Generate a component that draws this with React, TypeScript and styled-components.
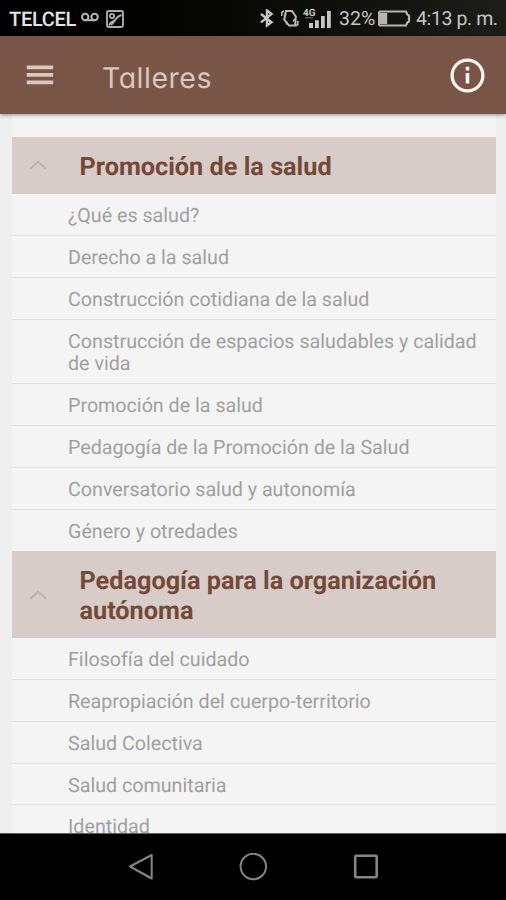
import React from 'react';
import styled, { createGlobalStyle } from 'styled-components';

const Global = createGlobalStyle`
  * { box-sizing: border-box; }
  html, body { margin: 0; padding: 0; background: #000; }
  body { font-family: Roboto, "Liberation Sans", sans-serif; text-rendering: geometricPrecision; }
`;

const Screen = styled.div`
  width: 506px;
  height: 900px;
  display: flex;
  flex-direction: column;
  overflow: hidden;
  background: #f2f2f2;
`;

const StatusBar = styled.header`
  height: 36px;
  flex: none;
  display: flex;
  align-items: center;
  padding: 2px 8px 0 9px;
  background: linear-gradient(90deg, #000 0%, #030402 30%, #0c0d08 60%, #1d1e19 100%);
  color: #c6c6c4;
  font-size: 19.5px;
  line-height: 24px;
  white-space: nowrap;
`;

const Carrier = styled.span`
  width: 72px;
  color: #e4e4e4;
  font-weight: 500;
  font-size: 20px;
  letter-spacing: -0.3px;
`;

const StatusIcon = styled.svg<{ $gap?: number }>`
  display: block;
  flex: none;
  margin-left: ${({ $gap = 0 }) => $gap}px;
`;

const Spacer = styled.div`
  flex: 1;
`;

const Percent = styled.span`
  width: 39px;
  margin-left: 7px;
  letter-spacing: 0;
`;

const Clock = styled.span`
  width: 82px;
  margin-left: 5px;
  letter-spacing: -0.4px;
`;

const AppBar = styled.div`
  height: 78px;
  flex: none;
  display: flex;
  align-items: center;
  padding: 0 21px 0 26px;
  background: #795548;
  box-shadow: 0 1px 4px rgba(0, 0, 0, 0.4);
  z-index: 1;
`;

const IconButton = styled.button`
  padding: 0;
  border: 0;
  background: none;
  display: flex;
`;

const Title = styled.h1`
  flex: 1;
  margin: 5px 0 0 48px;
  color: #dac7be;
  font-family: Inter, Lato, sans-serif;
  font-feature-settings: "cv11";
  font-size: 28.5px;
  letter-spacing: 0.5px;
  font-weight: 400;
  line-height: 34px;
`;

const Content = styled.main`
  flex: 1;
  min-height: 0;
  overflow: hidden;
  padding: 0 10px 0 12px;
  background: #eeeeee;
`;

const Accordion = styled.div`
  padding-top: 23px;
  background: #f4f4f4;
`;

const SectionHead = styled.div`
  display: flex;
  align-items: center;
  padding: 13.6px 12px 14.2px 17px;
  background: #d7ccc8;
`;

const Chevron = styled.svg`
  flex: none;
`;

const SectionTitle = styled.h2`
  margin: 2.4px 0 -2.4px 31.5px;
  color: #754937;
  font-size: 25.25px;
  font-weight: 700;
  line-height: 29.5px;
`;

const Item = styled.div`
  padding: 11px 8px 7px 56px;
  border-bottom: 1px solid #dfdfdf;
  color: #a0a0a0;
  font-size: 19.68px;
  line-height: 22.8px;
  &:last-child { border-bottom-color: transparent; }
`;

const NavBar = styled.nav`
  height: 67px;
  flex: none;
  display: flex;
  align-items: center;
  justify-content: center;
  gap: 86px;
  border-top: 1px solid #5c5e5d;
  background: #000;
`;

const sections = [
  {
    title: 'Promoción de la salud',
    items: [
      '¿Qué es salud?',
      'Derecho a la salud',
      'Construcción cotidiana de la salud',
      'Construcción de espacios saludables y calidad de vida',
      'Promoción de la salud',
      'Pedagogía de la Promoción de la Salud',
      'Conversatorio salud y autonomía',
      'Género y otredades',
    ],
  },
  {
    title: 'Pedagogía para la organización autónoma',
    items: [
      'Filosofía del cuidado',
      'Reapropiación del cuerpo-territorio',
      'Salud Colectiva',
      'Salud comunitaria',
      'Identidad',
    ],
  },
];

const NetworkLabel = styled.text`
  font: 700 10px Roboto, sans-serif;
  fill: #c6c6c4;
`;

export default function App() {
  return (
    <Screen>
      <Global />
      <StatusBar>
        <Carrier>TELCEL</Carrier>
        <StatusIcon width="18" height="14" viewBox="0 0 18 14" fill="none" stroke="#b5b5b5" strokeWidth="2">
          <circle cx="4.2" cy="5" r="3.2" />
          <circle cx="13.6" cy="5" r="3.2" />
          <path d="M4.2 8.2h9.4" />
        </StatusIcon>
        <StatusIcon $gap={7} width="18" height="18" viewBox="0 0 18 18" fill="none" stroke="#aaa" strokeWidth="1.9">
          <rect x="1" y="1" width="16" height="16" rx="1.5" />
          <circle cx="6" cy="6" r="2.1" />
          <path d="M3 15.5C5 10 8 12 9.5 9.5S12 6 15.5 5" />
          <path d="m5 15 4-4.5" />
        </StatusIcon>
        <Spacer />
        <StatusIcon width="14" height="20" viewBox="0 0 14 20" fill="none" stroke="#c6c6c4" strokeWidth="2.4">
          <path d="M1 5 11.5 13.2 7 16.5V1.4l4.5 3.7L1 13.4" />
        </StatusIcon>
        <StatusIcon $gap={7} width="18" height="20" viewBox="0 0 18 20" fill="none" stroke="#b8b8b6" strokeWidth="2">
          <path d="M5 2h6l3.8 5.5-.6 9H8L3.2 10.5z" />
          <path d="M.8 7V3.5L3 2M3.3 7.5 5 5M16.8 12v3.5L14.5 17M12.2 12.5 13.8 10M5.5 12v3.5" strokeWidth="1.6" />
        </StatusIcon>
        <StatusIcon $gap={4} width="29" height="24" viewBox="0 0 29 24" fill="#c6c6c4">
          <NetworkLabel x="0" y="8.5" textLength="12.5" lengthAdjust="spacingAndGlyphs">4G</NetworkLabel>
          <path d="M2 10h8v1.5H2z" fill="#555" />
          <path d="M6 16h4v5H6zM12 13.2h3.8V21H12zM18 9h3.8v12H18zM24 4h3.8v17H24z" />
        </StatusIcon>
        <Percent>32%</Percent>
        <StatusIcon width="33" height="18" viewBox="0 0 33 18" fill="none" stroke="#b5b5b3" strokeWidth="2.2">
          <path d="M2 1.5h26l1.2 2.8L31 5.5v6l-1.8 1.2L28 15.5H2l-1-1v-12z" />
          <path d="M2 3h7.2v11H2z" fill="#b5b5b3" stroke="none" />
        </StatusIcon>
        <Clock>4:13 p. m.</Clock>
      </StatusBar>
      <AppBar>
        <IconButton aria-label="Menú">
          <svg width="28" height="20" viewBox="0 0 28 20" fill="#dac7be">
            <path d="M.7.5h26.5v3.7H.7zM.7 8h26.5v3.7H.7zM.7 15.5h26.5v3.7H.7z" />
          </svg>
        </IconButton>
        <Title>Talleres</Title>
        <IconButton aria-label="Información">
          <svg width="35" height="35" viewBox="0 0 35 35" fill="none" stroke="#fbf3ec" strokeWidth="3.3">
            <circle cx="17.5" cy="17.5" r="15.4" />
            <path d="M17.5 15v10.5M17.5 8.8v3.6" strokeWidth="3.6" />
          </svg>
        </IconButton>
      </AppBar>
      <Content>
        <Accordion>
          {sections.map((section) => (
            <section key={section.title}>
              <SectionHead>
                <Chevron width="19" height="10" viewBox="0 0 19 10" fill="none" stroke="#bdb1ae" strokeWidth="1.9">
                  <path d="m1.3 8.7 7.7-7L17 8.7" />
                </Chevron>
                <SectionTitle>{section.title}</SectionTitle>
              </SectionHead>
              {section.items.map((item) => (
                <Item key={item}>{item}</Item>
              ))}
            </section>
          ))}
        </Accordion>
      </Content>
      <NavBar>
        <svg width="25" height="28" viewBox="0 0 25 28" fill="none" stroke="#858585" strokeWidth="2" strokeLinejoin="round">
          <path d="M23.7 2v23.5L2 13.5z" />
        </svg>
        <svg width="28" height="28" viewBox="0 0 28 28" fill="none" stroke="#858585" strokeWidth="2">
          <circle cx="14.3" cy="13.5" r="12.7" />
        </svg>
        <svg width="25" height="28" viewBox="0 0 25 28" fill="none" stroke="#858585" strokeWidth="2.6">
          <rect x="2.2" y="2.7" width="21.5" height="21.5" rx="1" />
        </svg>
      </NavBar>
    </Screen>
  );
}
